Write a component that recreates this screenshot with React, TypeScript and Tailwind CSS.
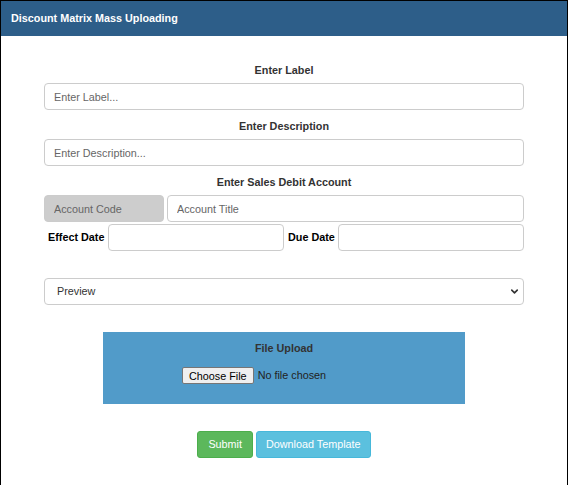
import { ChevronDown } from 'lucide-react';

const font = { fontFamily: '"Liberation Sans", Arial, sans-serif' };

export default function App() {
    return (
        <div className="w-[570px] h-[485px] bg-white overflow-hidden" style={font}>
            <div className="w-[568px] h-[490px] border-l border-t border-r border-black flex flex-col">
                {/* ── Header ── */}
                <header className="h-[35px] flex-shrink-0 flex items-center px-[10px] bg-[#2d5e89]">
                    <span className="text-[10.8px] font-bold text-white">Discount Matrix Mass Uploading</span>
                </header>

                {/* ── Form ── */}
                <div className="w-[480px] mx-auto pt-[26px] flex flex-col text-[10.8px] text-[#333]">
                    <label className="h-[17px] leading-[17px] text-center font-bold mb-[4px]">Enter Label</label>
                    <input
                        placeholder="Enter Label..."
                        className="h-[27px] w-full border border-[#ccc] rounded-[4px] pl-[9px] placeholder:text-[#666] outline-none"
                    />

                    <label className="h-[17px] leading-[17px] text-center font-bold mt-[8px] mb-[4px]">Enter Description</label>
                    <input
                        placeholder="Enter Description..."
                        className="h-[27px] w-full border border-[#ccc] rounded-[4px] pl-[9px] placeholder:text-[#666] outline-none"
                    />

                    <label className="h-[17px] leading-[17px] text-center font-bold mt-[8px] mb-[4px]">Enter Sales Debit Account</label>
                    <div className="flex gap-[3px]">
                        <input
                            placeholder="Account Code"
                            disabled
                            className="h-[27px] w-[120px] border border-[#ccc] rounded-[4px] pl-[9px] bg-[#cdcdcd] placeholder:text-[#666] outline-none"
                        />
                        <input
                            placeholder="Account Title"
                            className="h-[27px] flex-1 border border-[#ccc] rounded-[4px] pl-[9px] placeholder:text-[#666] outline-none"
                        />
                    </div>

                    <div className="flex items-center mt-[2px]">
                        <span className="font-bold text-black pl-[4px] w-[64px]">Effect Date</span>
                        <input className="h-[27px] w-[176px] border border-[#ccc] rounded-[4px] outline-none" />
                        <span className="font-bold text-black pl-[4px] w-[54px]">Due Date</span>
                        <input className="h-[27px] flex-1 border border-[#ccc] rounded-[4px] outline-none" />
                    </div>

                    <div className="relative mt-[27px]">
                        <select className="h-[27px] w-full appearance-none border border-[#ccc] rounded-[4px] pl-[12px] text-[#333] bg-white outline-none">
                            <option>Preview</option>
                        </select>
                        <ChevronDown
                            strokeWidth={3.5}
                            className="absolute right-[4px] top-[8px] w-[11px] h-[11px] text-[#333] pointer-events-none"
                        />
                    </div>
                </div>

                {/* ── File upload ── */}
                <div className="w-[362px] h-[72px] ml-[102px] mt-[27px] bg-[#519bc9] flex flex-col pt-[9px] text-[10.8px] text-[#333]">
                    <span className="font-bold leading-[14px] text-center">File Upload</span>
                    <div className="flex items-center mt-[12px] pl-[79px]">
                        <button className="h-[17px] px-[6px] bg-[#efefef] border border-[#767676] rounded-[2px] leading-[14px] text-black">
                            Choose File
                        </button>
                        <span className="ml-[4px] text-[#222]">No file chosen</span>
                    </div>
                </div>

                {/* ── Actions ── */}
                <div className="flex justify-center gap-[3px] mt-[27px]">
                    <button className="h-[27px] px-[10px] bg-[#5cb85c] border border-[#4cae4c] rounded-[3px] text-white text-[10.8px]">
                        Submit
                    </button>
                    <button className="h-[27px] px-[9px] bg-[#5bc0de] border border-[#46b8da] rounded-[3px] text-white text-[10.8px]">
                        Download Template
                    </button>
                </div>
            </div>
        </div>
    );
}
